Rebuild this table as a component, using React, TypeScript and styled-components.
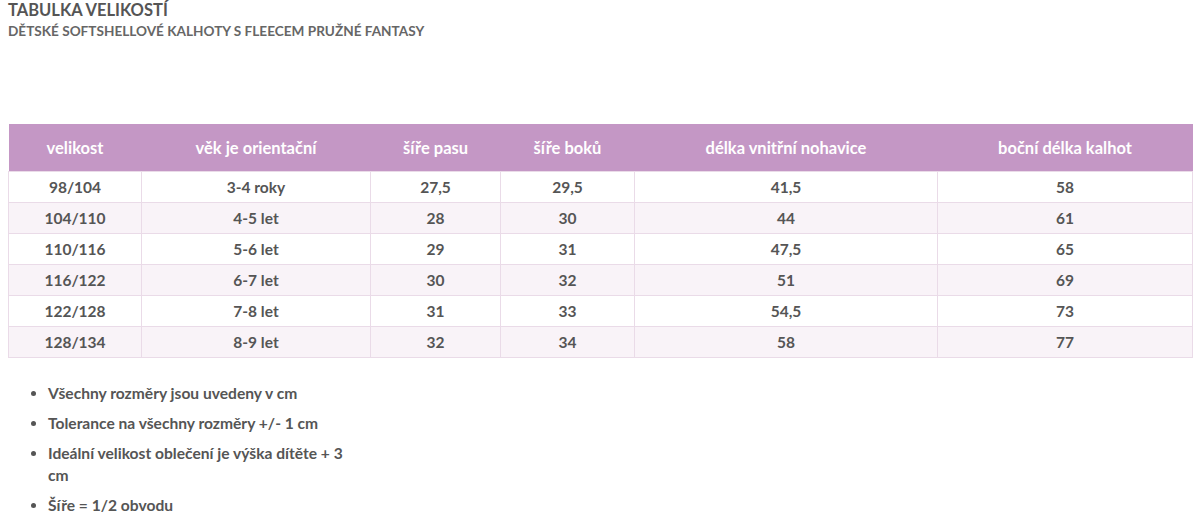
import React from 'react';
import styled, { createGlobalStyle } from 'styled-components';

const Global = createGlobalStyle`
  body {
    margin: 0;
    background: #fff;
    font-family: Lato, "Liberation Sans", sans-serif;
    color: #555;
  }
`

const Page = styled.div`
  padding: 0 8px;
`

const Title = styled.h1`
  margin: 0;
  font-size: 16.5px;
  line-height: 20px;
  font-weight: 700;
  color: #555;
  text-transform: uppercase;
`

const Subtitle = styled.h2`
  margin: 2px 0 0;
  font-size: 13.6px;
  line-height: 18px;
  font-weight: 700;
  color: #666;
  text-transform: uppercase;
`

const Table = styled.table`
  width: 100%;
  margin-top: 84px;
  border-collapse: collapse;
  table-layout: fixed;
  font-weight: 700;
`

const HeadCell = styled.th`
  background: #c497c5;
  color: #fff;
  height: 47px;
  padding: 0;
  font-size: 16.5px;
  font-weight: 700;
  text-align: center;
`

const Row = styled.tr<{ $alt: boolean }>`
  background: ${p => (p.$alt ? '#f9f3f8' : '#fff')};
`

const Cell = styled.td`
  height: 30px;
  padding: 0;
  font-size: 15.5px;
  text-align: center;
  color: #555;
  border: 1px solid #eadbe8;
`

const Notes = styled.ul`
  margin: 24px 0 0;
  padding: 0 0 0 40px;
  width: 305px;
  font-size: 15.6px;
  font-weight: 700;
  line-height: 22px;
  color: #555;
`

const Note = styled.li`
  margin-bottom: 8px;
`

const cols = [
  { label: 'velikost', width: 133 },
  { label: 'věk je orientační', width: 229 },
  { label: 'šíře pasu', width: 130 },
  { label: 'šíře boků', width: 134 },
  { label: 'délka vnitřní nohavice', width: 303 },
  { label: 'boční délka kalhot', width: 255 },
]

const rows = [
  ['98/104', '3-4 roky', '27,5', '29,5', '41,5', '58'],
  ['104/110', '4-5 let', '28', '30', '44', '61'],
  ['110/116', '5-6 let', '29', '31', '47,5', '65'],
  ['116/122', '6-7 let', '30', '32', '51', '69'],
  ['122/128', '7-8 let', '31', '33', '54,5', '73'],
  ['128/134', '8-9 let', '32', '34', '58', '77'],
]

const notes = [
  'Všechny rozměry jsou uvedeny v cm',
  'Tolerance na všechny rozměry +/- 1 cm',
  'Ideální velikost oblečení je výška dítěte + 3 cm',
  'Šíře = 1/2 obvodu',
]

const App = () => {
  return (
    <Page>
      <Global />
      <Title>Tabulka velikostí</Title>
      <Subtitle>Dětské softshellové kalhoty s fleecem pružné Fantasy</Subtitle>
      <Table>
        <colgroup>
          {cols.map(c => (
            <col key={c.label} style={{ width: c.width }} />
          ))}
        </colgroup>
        <thead>
          <tr>
            {cols.map(c => (
              <HeadCell key={c.label}>{c.label}</HeadCell>
            ))}
          </tr>
        </thead>
        <tbody>
          {rows.map((r, i) => (
            <Row key={r[0]} $alt={i % 2 === 1}>
              {r.map((v, j) => (
                <Cell key={j}>{v}</Cell>
              ))}
            </Row>
          ))}
        </tbody>
      </Table>
      <Notes>
        {notes.map(n => (
          <Note key={n}>{n}</Note>
        ))}
      </Notes>
    </Page>
  );
}

export default App;
